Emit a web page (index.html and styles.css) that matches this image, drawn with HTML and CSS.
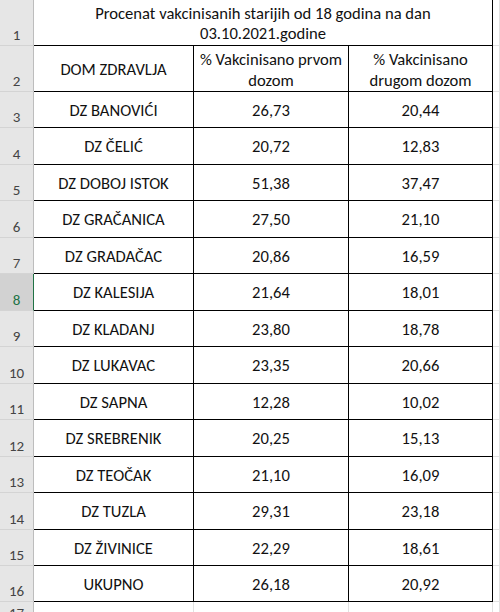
FILE: index.html
```html
<!DOCTYPE html>
<html lang="bs">
<head>
  <meta charset="UTF-8">
  <meta name="viewport" content="width=device-width, initial-scale=1.0">
  <title>Procenat vakcinisanih</title>
  <link rel="stylesheet" href="styles.css">
</head>
<body>
  <div class="sheet">
    <div class="rh">1</div>
    <div class="cell title">Procenat vakcinisanih starijih od 18 godina na dan<br>03.10.2021.godine</div>
    <div class="grid"></div>

    <div class="rh">2</div>
    <div class="cell head">DOM ZDRAVLJA</div>
    <div class="cell head">% Vakcinisano prvom dozom</div>
    <div class="cell head">% Vakcinisano drugom dozom</div>
    <div class="grid"></div>

    <div class="rh">3</div>
    <div class="cell">DZ BANOVIĆI</div><div class="cell">26,73</div><div class="cell">20,44</div><div class="grid"></div>
    <div class="rh">4</div>
    <div class="cell">DZ ČELIĆ</div><div class="cell">20,72</div><div class="cell">12,83</div><div class="grid"></div>
    <div class="rh">5</div>
    <div class="cell">DZ DOBOJ ISTOK</div><div class="cell">51,38</div><div class="cell">37,47</div><div class="grid"></div>
    <div class="rh">6</div>
    <div class="cell">DZ GRAČANICA</div><div class="cell">27,50</div><div class="cell">21,10</div><div class="grid"></div>
    <div class="rh">7</div>
    <div class="cell">DZ GRADAČAC</div><div class="cell">20,86</div><div class="cell">16,59</div><div class="grid"></div>
    <div class="rh selected">8</div>
    <div class="cell">DZ KALESIJA</div><div class="cell">21,64</div><div class="cell">18,01</div><div class="grid"></div>
    <div class="rh">9</div>
    <div class="cell">DZ KLADANJ</div><div class="cell">23,80</div><div class="cell">18,78</div><div class="grid"></div>
    <div class="rh">10</div>
    <div class="cell">DZ LUKAVAC</div><div class="cell">23,35</div><div class="cell">20,66</div><div class="grid"></div>
    <div class="rh">11</div>
    <div class="cell">DZ SAPNA</div><div class="cell">12,28</div><div class="cell">10,02</div><div class="grid"></div>
    <div class="rh">12</div>
    <div class="cell">DZ SREBRENIK</div><div class="cell">20,25</div><div class="cell">15,13</div><div class="grid"></div>
    <div class="rh">13</div>
    <div class="cell">DZ TEOČAK</div><div class="cell">21,10</div><div class="cell">16,09</div><div class="grid"></div>
    <div class="rh">14</div>
    <div class="cell">DZ TUZLA</div><div class="cell">29,31</div><div class="cell">23,18</div><div class="grid"></div>
    <div class="rh">15</div>
    <div class="cell">DZ ŽIVINICE</div><div class="cell">22,29</div><div class="cell">18,61</div><div class="grid"></div>
    <div class="rh">16</div>
    <div class="cell">UKUPNO</div><div class="cell">26,18</div><div class="cell">20,92</div><div class="grid"></div>

    <div class="rh">17</div>
    <div class="grid"></div><div class="grid"></div><div class="grid"></div><div class="grid"></div>
  </div>
</body>
</html>
```

FILE: styles.css
```css
html, body {
  margin: 0;
  height: 100%;
  overflow: hidden;
  background-color: #fff;
}
.sheet {
  display: grid;
  grid-template-columns: 34px 160px 155px 144px 1fr;
  grid-template-rows: 46px 46px repeat(6, 36px 37px) 36px 36px 22px;
  font-family: Carlito, Lato, "Liberation Sans", sans-serif;
  font-size: 16.6px;
  color: #111;
}
.rh {
  display: flex;
  align-items: flex-end;
  justify-content: center;
  padding-bottom: 1px;
  background-color: #e6e6e6;
  border-right: 1px solid #bdbdbd;
  border-bottom: 1px solid #d4d4d4;
  color: #444;
  font-size: 15px;
  line-height: 18px;
  box-sizing: border-box;
}
.rh.selected {
  background-color: #d2d2d2;
  border-right-color: #217346;
  color: #217346;
}
.cell {
  display: flex;
  align-items: center;
  justify-content: center;
  text-align: center;
  line-height: 20px;
  border-right: 1px solid #000;
  border-bottom: 1px solid #000;
  box-sizing: border-box;
  padding: 0 2px;
}
.title {
  grid-column: span 3;
}
.head {
  line-height: 21px;
  padding-top: 2px;
}
.grid {
  border-right: 1px solid #e1e1e1;
  border-bottom: 1px solid #e1e1e1;
  box-sizing: border-box;
}
```
